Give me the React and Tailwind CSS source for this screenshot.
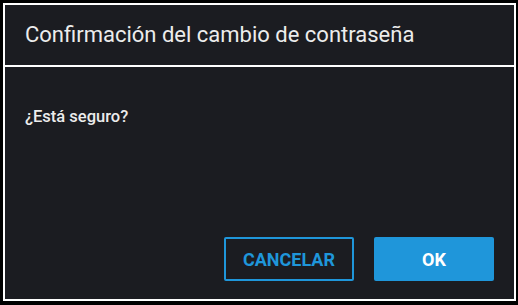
export default function App() {
  return (
    <div className="w-[518px] h-[305px] bg-black pl-[3px] pt-[3px]" style={{ fontFamily: "Roboto, 'Liberation Sans', sans-serif" }}>
      <div className="w-[513px] h-[298px] border-2 border-white bg-[#1b1c21] flex flex-col">
        <div className="h-[62px] border-b-2 border-white flex items-center pl-[20px] shrink-0">
          <span className="text-[22px] text-[#ececec] leading-none">Confirmación del cambio de contraseña</span>
        </div>
        <div className="flex-1 flex flex-col px-[20px]">
          <div className="mt-[40px] text-[16.5px] font-medium text-[#ececec] leading-[20px]">¿Está seguro?</div>
          <div className="mt-auto mb-[18px] flex justify-end gap-[20px]">
            <button className="w-[130px] h-[44px] border-2 border-[#1f96da] text-[#1f96da] text-[18px] font-bold rounded-[2px]">CANCELAR</button>
            <button className="w-[120px] h-[44px] bg-[#1f96da] text-white text-[18px] font-bold rounded-[2px]">OK</button>
          </div>
        </div>
      </div>
    </div>
  );
}
